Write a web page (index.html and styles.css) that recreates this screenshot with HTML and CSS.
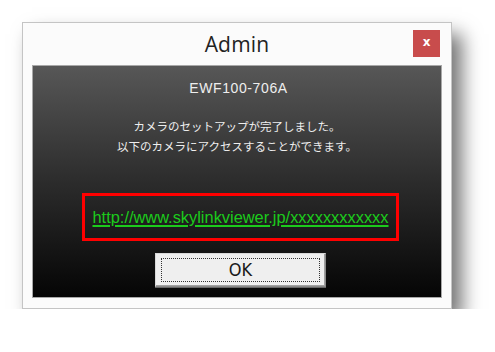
FILE: index.html
```html
<!DOCTYPE html>
<html lang="ja">
<head>
<meta charset="utf-8">
<title>Admin</title>
<link rel="stylesheet" href="styles.css">
</head>
<body>
<div class="window">
  <div class="titlebar">
    <span class="spacer"></span>
    <span class="title">Admin</span>
    <span class="close">x</span>
  </div>
  <div class="panel">
    <div class="model">EWF100-706A</div>
    <div class="message">
      <div>カメラのセットアップが完了しました。</div>
      <div>以下のカメラにアクセスすることができます。</div>
    </div>
    <div class="actions">
      <div class="linkbox"><a class="link" href="#">http://www.skylinkviewer.jp/xxxxxxxxxxxx</a></div>
      <div class="button"><span class="focus">OK</span></div>
    </div>
  </div>
</div>
</body>
</html>
```
FILE: styles.css
```css
html, body {
  margin: 0;
  padding: 0;
  background: #ffffff;
}
body {
  padding: 22px 0 0 22px;
}
.window {
  width: 430px;
  height: 287px;
  box-sizing: border-box;
  border: 1px solid #c4c4c4;
  background: #fbfbfb;
  box-shadow: 10px 12px 18px rgba(0, 0, 0, 0.55);
  display: flex;
  flex-direction: column;
  padding: 0 9px 10px 9px;
}
.titlebar {
  height: 42px;
  display: grid;
  grid-template-columns: 1fr auto 1fr;
  align-items: start;
  margin: 0 -9px;
}
.title {
  font-family: "Open Sans", "DejaVu Sans", sans-serif;
  font-size: 21px;
  line-height: 42px;
  color: #222;
  letter-spacing: 0.2px;
}
.close {
  justify-self: end;
  margin: 7px 11px 0 0;
  width: 27px;
  height: 27px;
  background: #c84c4c;
  color: #fff;
  font-family: "DejaVu Sans", sans-serif;
  font-weight: bold;
  font-size: 12px;
  line-height: 25px;
  text-align: center;
}
.panel {
  width: 410px;
  height: 233px;
  box-sizing: border-box;
  border: 1px solid #a8a8a8;
  background: linear-gradient(to bottom, #575757 0%, #2c2c2c 50%, #050505 100%);
  display: flex;
  flex-direction: column;
  align-items: center;
  color: #f4f4f4;
}
.model {
  margin-top: 14px;
  font-family: "Liberation Sans", sans-serif;
  font-size: 14px;
  line-height: 16px;
  letter-spacing: 0.6px;
  margin-left: 3px;
  color: #eeeeee;
}
.message {
  margin-top: 20px;
  font-family: "Noto Sans CJK JP", sans-serif;
  font-size: 11.5px;
  line-height: 20px;
  text-align: center;
  color: #eeeeee;
}
.actions {
  display: flex;
  flex-direction: column;
  align-items: center;
  margin-left: 7px;
}
.linkbox {
  margin-top: 37px;
  width: 317px;
  height: 48px;
  box-sizing: border-box;
  border: 3px solid #ff0000;
  display: flex;
  align-items: center;
  justify-content: center;
}
.link {
  font-family: "Liberation Sans", sans-serif;
  font-size: 16.4px;
  color: #1ccb1c;
  text-decoration: underline;
  text-decoration-thickness: 2px;
  text-underline-offset: 2px;
}
.button {
  margin-top: 12px;
  width: 171px;
  height: 34px;
  box-sizing: border-box;
  background: #efefef;
  border: 1px solid #8a8a8a;
  border-top-color: #d8d8d8;
  border-left-color: #d8d8d8;
  box-shadow: inset -1px -1px 0 #a0a0a0, 0 1px 0 #666;
  padding: 4px 5px;
  display: flex;
}
.focus {
  flex: 1;
  border: 1px dotted #333;
  font-family: "DejaVu Sans", sans-serif;
  font-stretch: condensed;
  font-size: 18px;
  line-height: 22px;
  color: #1a1a1a;
  text-align: center;
}
```
